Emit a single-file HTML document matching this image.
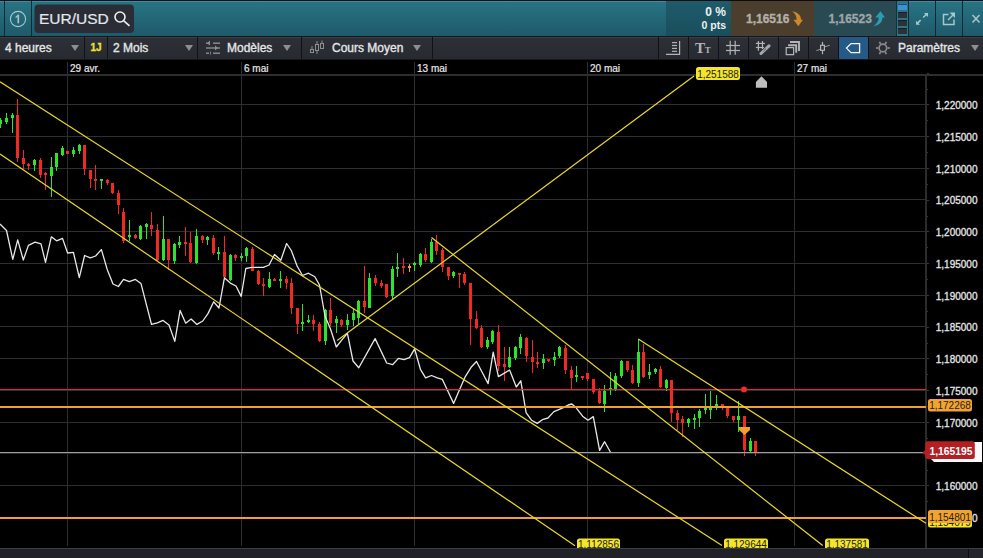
<!DOCTYPE html>
<html><head><meta charset="utf-8">
<style>
*{margin:0;padding:0}
html,body{width:983px;height:558px;overflow:hidden;background:#000}
svg{display:block}
text{font-family:"Liberation Sans",sans-serif}
</style></head><body>
<svg width="983" height="558" viewBox="0 0 983 558">
<defs>
<linearGradient id="gteal" x1="0" y1="0" x2="0" y2="1"><stop offset="0" stop-color="#287484"/><stop offset="1" stop-color="#1e5a6a"/></linearGradient>
<linearGradient id="gpct" x1="0" y1="0" x2="0" y2="1"><stop offset="0" stop-color="#1f5b6a"/><stop offset="1" stop-color="#1a4e5c"/></linearGradient>
<linearGradient id="gtool" x1="0" y1="0" x2="0" y2="1"><stop offset="0" stop-color="#2d3037"/><stop offset="1" stop-color="#272a31"/></linearGradient>
</defs>
<rect x="0" y="74" width="983" height="2" fill="#2e2e2e" />
<rect x="0" y="104" width="926" height="1" fill="#2e2e2e" />
<rect x="0" y="136" width="926" height="1" fill="#2e2e2e" />
<rect x="0" y="168" width="926" height="1" fill="#2e2e2e" />
<rect x="0" y="199" width="926" height="1" fill="#2e2e2e" />
<rect x="0" y="231" width="926" height="1" fill="#2e2e2e" />
<rect x="0" y="263" width="926" height="1" fill="#2e2e2e" />
<rect x="0" y="295" width="926" height="1" fill="#2e2e2e" />
<rect x="0" y="326" width="926" height="1" fill="#2e2e2e" />
<rect x="0" y="358" width="926" height="1" fill="#2e2e2e" />
<rect x="0" y="390" width="926" height="1" fill="#2e2e2e" />
<rect x="0" y="422" width="926" height="1" fill="#2e2e2e" />
<rect x="0" y="453" width="926" height="1" fill="#2e2e2e" />
<rect x="0" y="485" width="926" height="1" fill="#2e2e2e" />
<rect x="67" y="62" width="1" height="484" fill="#2e2e2e" />
<rect x="241" y="62" width="1" height="484" fill="#2e2e2e" />
<rect x="414" y="62" width="1" height="484" fill="#2e2e2e" />
<rect x="587" y="62" width="1" height="484" fill="#2e2e2e" />
<rect x="794" y="62" width="1" height="484" fill="#2e2e2e" />
<rect x="925" y="76" width="2" height="472" fill="#2c2c2c" />
<rect x="927" y="73" width="2" height="1" fill="#3a3a3a" />
<rect x="927" y="89" width="1" height="1" fill="#3a3a3a" />
<rect x="927" y="104" width="2" height="1" fill="#3a3a3a" />
<rect x="927" y="120" width="1" height="1" fill="#3a3a3a" />
<rect x="927" y="136" width="2" height="1" fill="#3a3a3a" />
<rect x="927" y="152" width="1" height="1" fill="#3a3a3a" />
<rect x="927" y="168" width="2" height="1" fill="#3a3a3a" />
<rect x="927" y="184" width="1" height="1" fill="#3a3a3a" />
<rect x="927" y="200" width="2" height="1" fill="#3a3a3a" />
<rect x="927" y="216" width="1" height="1" fill="#3a3a3a" />
<rect x="927" y="231" width="2" height="1" fill="#3a3a3a" />
<rect x="927" y="247" width="1" height="1" fill="#3a3a3a" />
<rect x="927" y="263" width="2" height="1" fill="#3a3a3a" />
<rect x="927" y="279" width="1" height="1" fill="#3a3a3a" />
<rect x="927" y="295" width="2" height="1" fill="#3a3a3a" />
<rect x="927" y="311" width="1" height="1" fill="#3a3a3a" />
<rect x="927" y="327" width="2" height="1" fill="#3a3a3a" />
<rect x="927" y="343" width="1" height="1" fill="#3a3a3a" />
<rect x="927" y="358" width="2" height="1" fill="#3a3a3a" />
<rect x="927" y="374" width="1" height="1" fill="#3a3a3a" />
<rect x="927" y="390" width="2" height="1" fill="#3a3a3a" />
<rect x="927" y="406" width="1" height="1" fill="#3a3a3a" />
<rect x="927" y="422" width="2" height="1" fill="#3a3a3a" />
<rect x="927" y="438" width="1" height="1" fill="#3a3a3a" />
<rect x="927" y="454" width="2" height="1" fill="#3a3a3a" />
<rect x="927" y="470" width="1" height="1" fill="#3a3a3a" />
<rect x="927" y="485" width="2" height="1" fill="#3a3a3a" />
<rect x="927" y="501" width="1" height="1" fill="#3a3a3a" />
<rect x="0" y="118" width="1" height="10" fill="#2be52b" />
<rect x="-1" y="120" width="3" height="4" fill="#2be52b" />
<rect x="6" y="113" width="1" height="11" fill="#2be52b" />
<rect x="5" y="118" width="3" height="4" fill="#2be52b" />
<rect x="12" y="113" width="1" height="20" fill="#2be52b" />
<rect x="11" y="115" width="3" height="3" fill="#2be52b" />
<rect x="17" y="99" width="1" height="63" fill="#f02a22" />
<rect x="16" y="115" width="3" height="43" fill="#f02a22" />
<rect x="23" y="150" width="1" height="19" fill="#f02a22" />
<rect x="22" y="158" width="3" height="6" fill="#f02a22" />
<rect x="28" y="163" width="1" height="7" fill="#f02a22" />
<rect x="27" y="164" width="3" height="2" fill="#f02a22" />
<rect x="34" y="159" width="1" height="12" fill="#2be52b" />
<rect x="33" y="160" width="3" height="5" fill="#2be52b" />
<rect x="40" y="158" width="1" height="20" fill="#f02a22" />
<rect x="39" y="160" width="3" height="15" fill="#f02a22" />
<rect x="45" y="172" width="1" height="18" fill="#f02a22" />
<rect x="44" y="173" width="3" height="2" fill="#f02a22" />
<rect x="51" y="157" width="1" height="40" fill="#2be52b" />
<rect x="50" y="167" width="3" height="9" fill="#2be52b" />
<rect x="56" y="153" width="1" height="18" fill="#2be52b" />
<rect x="55" y="153" width="3" height="14" fill="#2be52b" />
<rect x="62" y="146" width="1" height="10" fill="#2be52b" />
<rect x="61" y="148" width="3" height="7" fill="#2be52b" />
<rect x="67" y="151" width="1" height="3" fill="#f02a22" />
<rect x="66" y="151" width="3" height="3" fill="#f02a22" />
<rect x="73" y="147" width="1" height="10" fill="#2be52b" />
<rect x="72" y="150" width="3" height="4" fill="#2be52b" />
<rect x="79" y="144" width="1" height="10" fill="#2be52b" />
<rect x="78" y="145" width="3" height="6" fill="#2be52b" />
<rect x="84" y="145" width="1" height="30" fill="#f02a22" />
<rect x="83" y="145" width="3" height="24" fill="#f02a22" />
<rect x="90" y="170" width="1" height="18" fill="#f02a22" />
<rect x="89" y="170" width="3" height="9" fill="#f02a22" />
<rect x="95" y="165" width="1" height="25" fill="#f02a22" />
<rect x="94" y="179" width="3" height="2" fill="#f02a22" />
<rect x="101" y="179" width="1" height="10" fill="#2be52b" />
<rect x="100" y="179" width="3" height="2" fill="#2be52b" />
<rect x="107" y="179" width="1" height="6" fill="#f02a22" />
<rect x="106" y="180" width="3" height="3" fill="#f02a22" />
<rect x="112" y="183" width="1" height="11" fill="#f02a22" />
<rect x="111" y="183" width="3" height="10" fill="#f02a22" />
<rect x="118" y="190" width="1" height="24" fill="#f02a22" />
<rect x="117" y="193" width="3" height="12" fill="#f02a22" />
<rect x="123" y="208" width="1" height="35" fill="#f02a22" />
<rect x="122" y="212" width="3" height="29" fill="#f02a22" />
<rect x="129" y="220" width="1" height="21" fill="#2be52b" />
<rect x="128" y="235" width="3" height="2" fill="#2be52b" />
<rect x="135" y="234" width="1" height="5" fill="#f02a22" />
<rect x="134" y="235" width="3" height="3" fill="#f02a22" />
<rect x="140" y="225" width="1" height="15" fill="#2be52b" />
<rect x="139" y="226" width="3" height="13" fill="#2be52b" />
<rect x="146" y="223" width="1" height="16" fill="#2be52b" />
<rect x="145" y="224" width="3" height="3" fill="#2be52b" />
<rect x="151" y="212" width="1" height="24" fill="#f02a22" />
<rect x="150" y="225" width="3" height="4" fill="#f02a22" />
<rect x="157" y="224" width="1" height="37" fill="#f02a22" />
<rect x="156" y="230" width="3" height="30" fill="#f02a22" />
<rect x="163" y="216" width="1" height="45" fill="#2be52b" />
<rect x="162" y="239" width="3" height="21" fill="#2be52b" />
<rect x="168" y="239" width="1" height="31" fill="#f02a22" />
<rect x="167" y="239" width="3" height="21" fill="#f02a22" />
<rect x="174" y="243" width="1" height="21" fill="#2be52b" />
<rect x="173" y="244" width="3" height="17" fill="#2be52b" />
<rect x="179" y="236" width="1" height="12" fill="#2be52b" />
<rect x="178" y="242" width="3" height="3" fill="#2be52b" />
<rect x="185" y="227" width="1" height="29" fill="#f02a22" />
<rect x="184" y="242" width="3" height="2" fill="#f02a22" />
<rect x="190" y="232" width="1" height="31" fill="#f02a22" />
<rect x="189" y="243" width="3" height="19" fill="#f02a22" />
<rect x="196" y="229" width="1" height="35" fill="#2be52b" />
<rect x="195" y="236" width="3" height="27" fill="#2be52b" />
<rect x="202" y="235" width="1" height="8" fill="#f02a22" />
<rect x="201" y="236" width="3" height="4" fill="#f02a22" />
<rect x="207" y="236" width="1" height="9" fill="#2be52b" />
<rect x="206" y="237" width="3" height="3" fill="#2be52b" />
<rect x="213" y="235" width="1" height="20" fill="#f02a22" />
<rect x="212" y="238" width="3" height="15" fill="#f02a22" />
<rect x="218" y="247" width="1" height="13" fill="#2be52b" />
<rect x="217" y="252" width="3" height="2" fill="#2be52b" />
<rect x="224" y="236" width="1" height="42" fill="#f02a22" />
<rect x="223" y="252" width="3" height="25" fill="#f02a22" />
<rect x="230" y="254" width="1" height="27" fill="#2be52b" />
<rect x="229" y="255" width="3" height="25" fill="#2be52b" />
<rect x="235" y="254" width="1" height="7" fill="#f02a22" />
<rect x="234" y="255" width="3" height="3" fill="#f02a22" />
<rect x="241" y="253" width="1" height="8" fill="#2be52b" />
<rect x="240" y="256" width="3" height="2" fill="#2be52b" />
<rect x="246" y="247" width="1" height="15" fill="#2be52b" />
<rect x="245" y="248" width="3" height="8" fill="#2be52b" />
<rect x="252" y="247" width="1" height="24" fill="#f02a22" />
<rect x="251" y="249" width="3" height="22" fill="#f02a22" />
<rect x="258" y="270" width="1" height="15" fill="#f02a22" />
<rect x="257" y="271" width="3" height="13" fill="#f02a22" />
<rect x="263" y="278" width="1" height="18" fill="#f02a22" />
<rect x="262" y="284" width="3" height="2" fill="#f02a22" />
<rect x="269" y="272" width="1" height="16" fill="#2be52b" />
<rect x="268" y="279" width="3" height="8" fill="#2be52b" />
<rect x="274" y="278" width="1" height="3" fill="#f02a22" />
<rect x="273" y="279" width="3" height="2" fill="#f02a22" />
<rect x="280" y="271" width="1" height="17" fill="#2be52b" />
<rect x="279" y="279" width="3" height="2" fill="#2be52b" />
<rect x="286" y="276" width="1" height="13" fill="#f02a22" />
<rect x="285" y="279" width="3" height="4" fill="#f02a22" />
<rect x="291" y="278" width="1" height="36" fill="#f02a22" />
<rect x="290" y="283" width="3" height="25" fill="#f02a22" />
<rect x="297" y="308" width="1" height="26" fill="#f02a22" />
<rect x="296" y="308" width="3" height="16" fill="#f02a22" />
<rect x="302" y="304" width="1" height="27" fill="#2be52b" />
<rect x="301" y="322" width="3" height="2" fill="#2be52b" />
<rect x="308" y="315" width="1" height="8" fill="#2be52b" />
<rect x="307" y="320" width="3" height="2" fill="#2be52b" />
<rect x="313" y="315" width="1" height="16" fill="#f02a22" />
<rect x="312" y="320" width="3" height="4" fill="#f02a22" />
<rect x="319" y="322" width="1" height="20" fill="#f02a22" />
<rect x="318" y="324" width="3" height="17" fill="#f02a22" />
<rect x="325" y="309" width="1" height="36" fill="#2be52b" />
<rect x="324" y="310" width="3" height="31" fill="#2be52b" />
<rect x="330" y="298" width="1" height="28" fill="#f02a22" />
<rect x="329" y="310" width="3" height="13" fill="#f02a22" />
<rect x="336" y="316" width="1" height="17" fill="#2be52b" />
<rect x="335" y="319" width="3" height="4" fill="#2be52b" />
<rect x="341" y="319" width="1" height="8" fill="#f02a22" />
<rect x="340" y="320" width="3" height="5" fill="#f02a22" />
<rect x="347" y="314" width="1" height="16" fill="#2be52b" />
<rect x="346" y="320" width="3" height="5" fill="#2be52b" />
<rect x="353" y="309" width="1" height="17" fill="#2be52b" />
<rect x="352" y="313" width="3" height="7" fill="#2be52b" />
<rect x="358" y="300" width="1" height="25" fill="#2be52b" />
<rect x="357" y="301" width="3" height="17" fill="#2be52b" />
<rect x="364" y="266" width="1" height="47" fill="#f02a22" />
<rect x="363" y="301" width="3" height="6" fill="#f02a22" />
<rect x="369" y="273" width="1" height="35" fill="#2be52b" />
<rect x="368" y="278" width="3" height="30" fill="#2be52b" />
<rect x="375" y="275" width="1" height="11" fill="#f02a22" />
<rect x="374" y="278" width="3" height="5" fill="#f02a22" />
<rect x="381" y="280" width="1" height="8" fill="#f02a22" />
<rect x="380" y="283" width="3" height="3" fill="#f02a22" />
<rect x="386" y="284" width="1" height="14" fill="#f02a22" />
<rect x="385" y="284" width="3" height="13" fill="#f02a22" />
<rect x="392" y="266" width="1" height="34" fill="#2be52b" />
<rect x="391" y="269" width="3" height="27" fill="#2be52b" />
<rect x="397" y="253" width="1" height="24" fill="#2be52b" />
<rect x="396" y="267" width="3" height="2" fill="#2be52b" />
<rect x="403" y="258" width="1" height="16" fill="#f02a22" />
<rect x="402" y="266" width="3" height="2" fill="#f02a22" />
<rect x="409" y="264" width="1" height="8" fill="#f0a030" />
<rect x="408" y="266" width="3" height="2" fill="#f0a030" />
<rect x="414" y="262" width="1" height="9" fill="#2be52b" />
<rect x="413" y="263" width="3" height="2" fill="#2be52b" />
<rect x="420" y="253" width="1" height="14" fill="#2be52b" />
<rect x="419" y="254" width="3" height="11" fill="#2be52b" />
<rect x="425" y="248" width="1" height="14" fill="#f02a22" />
<rect x="424" y="254" width="3" height="6" fill="#f02a22" />
<rect x="431" y="239" width="1" height="24" fill="#2be52b" />
<rect x="430" y="242" width="3" height="20" fill="#2be52b" />
<rect x="436" y="235" width="1" height="20" fill="#f02a22" />
<rect x="435" y="242" width="3" height="9" fill="#f02a22" />
<rect x="442" y="248" width="1" height="24" fill="#f02a22" />
<rect x="441" y="250" width="3" height="17" fill="#f02a22" />
<rect x="448" y="267" width="1" height="13" fill="#f02a22" />
<rect x="447" y="267" width="3" height="9" fill="#f02a22" />
<rect x="453" y="271" width="1" height="7" fill="#2be52b" />
<rect x="452" y="272" width="3" height="4" fill="#2be52b" />
<rect x="459" y="273" width="1" height="15" fill="#f02a22" />
<rect x="458" y="273" width="3" height="2" fill="#f02a22" />
<rect x="464" y="272" width="1" height="13" fill="#f02a22" />
<rect x="463" y="274" width="3" height="9" fill="#f02a22" />
<rect x="470" y="283" width="1" height="62" fill="#f02a22" />
<rect x="469" y="283" width="3" height="36" fill="#f02a22" />
<rect x="476" y="311" width="1" height="18" fill="#f02a22" />
<rect x="475" y="319" width="3" height="9" fill="#f02a22" />
<rect x="481" y="325" width="1" height="23" fill="#f02a22" />
<rect x="480" y="328" width="3" height="19" fill="#f02a22" />
<rect x="487" y="337" width="1" height="12" fill="#2be52b" />
<rect x="486" y="340" width="3" height="7" fill="#2be52b" />
<rect x="492" y="330" width="1" height="14" fill="#2be52b" />
<rect x="491" y="331" width="3" height="11" fill="#2be52b" />
<rect x="498" y="325" width="1" height="46" fill="#f02a22" />
<rect x="497" y="332" width="3" height="34" fill="#f02a22" />
<rect x="504" y="347" width="1" height="34" fill="#f02a22" />
<rect x="503" y="364" width="3" height="3" fill="#f02a22" />
<rect x="509" y="347" width="1" height="21" fill="#2be52b" />
<rect x="508" y="357" width="3" height="10" fill="#2be52b" />
<rect x="515" y="346" width="1" height="14" fill="#2be52b" />
<rect x="514" y="347" width="3" height="11" fill="#2be52b" />
<rect x="520" y="334" width="1" height="20" fill="#2be52b" />
<rect x="519" y="337" width="3" height="11" fill="#2be52b" />
<rect x="526" y="337" width="1" height="25" fill="#f02a22" />
<rect x="525" y="338" width="3" height="18" fill="#f02a22" />
<rect x="532" y="340" width="1" height="33" fill="#f02a22" />
<rect x="531" y="357" width="3" height="5" fill="#f02a22" />
<rect x="537" y="352" width="1" height="16" fill="#f02a22" />
<rect x="536" y="362" width="3" height="2" fill="#f02a22" />
<rect x="543" y="354" width="1" height="15" fill="#2be52b" />
<rect x="542" y="359" width="3" height="4" fill="#2be52b" />
<rect x="548" y="359" width="1" height="3" fill="#f02a22" />
<rect x="547" y="359" width="3" height="2" fill="#f02a22" />
<rect x="554" y="352" width="1" height="14" fill="#2be52b" />
<rect x="553" y="357" width="3" height="3" fill="#2be52b" />
<rect x="559" y="346" width="1" height="12" fill="#2be52b" />
<rect x="558" y="347" width="3" height="9" fill="#2be52b" />
<rect x="565" y="345" width="1" height="29" fill="#f02a22" />
<rect x="564" y="348" width="3" height="22" fill="#f02a22" />
<rect x="571" y="366" width="1" height="23" fill="#f02a22" />
<rect x="570" y="370" width="3" height="8" fill="#f02a22" />
<rect x="576" y="366" width="1" height="16" fill="#2be52b" />
<rect x="575" y="375" width="3" height="2" fill="#2be52b" />
<rect x="582" y="376" width="1" height="4" fill="#f02a22" />
<rect x="581" y="376" width="3" height="2" fill="#f02a22" />
<rect x="587" y="373" width="1" height="8" fill="#f02a22" />
<rect x="586" y="373" width="3" height="6" fill="#f02a22" />
<rect x="593" y="379" width="1" height="15" fill="#f02a22" />
<rect x="592" y="379" width="3" height="13" fill="#f02a22" />
<rect x="599" y="388" width="1" height="16" fill="#f02a22" />
<rect x="598" y="391" width="3" height="12" fill="#f02a22" />
<rect x="604" y="385" width="1" height="27" fill="#2be52b" />
<rect x="603" y="391" width="3" height="13" fill="#2be52b" />
<rect x="610" y="372" width="1" height="23" fill="#2be52b" />
<rect x="609" y="388" width="3" height="2" fill="#2be52b" />
<rect x="615" y="373" width="1" height="18" fill="#2be52b" />
<rect x="614" y="376" width="3" height="13" fill="#2be52b" />
<rect x="621" y="360" width="1" height="18" fill="#2be52b" />
<rect x="620" y="361" width="3" height="15" fill="#2be52b" />
<rect x="627" y="361" width="1" height="11" fill="#f02a22" />
<rect x="626" y="361" width="3" height="9" fill="#f02a22" />
<rect x="632" y="365" width="1" height="19" fill="#f02a22" />
<rect x="631" y="370" width="3" height="13" fill="#f02a22" />
<rect x="638" y="339" width="1" height="48" fill="#2be52b" />
<rect x="637" y="352" width="3" height="31" fill="#2be52b" />
<rect x="643" y="344" width="1" height="34" fill="#f02a22" />
<rect x="642" y="352" width="3" height="25" fill="#f02a22" />
<rect x="649" y="364" width="1" height="15" fill="#2be52b" />
<rect x="648" y="372" width="3" height="3" fill="#2be52b" />
<rect x="655" y="368" width="1" height="6" fill="#2be52b" />
<rect x="654" y="369" width="3" height="3" fill="#2be52b" />
<rect x="660" y="366" width="1" height="22" fill="#f02a22" />
<rect x="659" y="369" width="3" height="18" fill="#f02a22" />
<rect x="666" y="379" width="1" height="12" fill="#2be52b" />
<rect x="665" y="380" width="3" height="8" fill="#2be52b" />
<rect x="671" y="380" width="1" height="42" fill="#f02a22" />
<rect x="670" y="380" width="3" height="33" fill="#f02a22" />
<rect x="677" y="410" width="1" height="20" fill="#f02a22" />
<rect x="676" y="413" width="3" height="7" fill="#f02a22" />
<rect x="682" y="416" width="1" height="21" fill="#f02a22" />
<rect x="681" y="419" width="3" height="4" fill="#f02a22" />
<rect x="688" y="418" width="1" height="9" fill="#2be52b" />
<rect x="687" y="419" width="3" height="4" fill="#2be52b" />
<rect x="694" y="414" width="1" height="15" fill="#2be52b" />
<rect x="693" y="418" width="3" height="2" fill="#2be52b" />
<rect x="699" y="409" width="1" height="18" fill="#2be52b" />
<rect x="698" y="411" width="3" height="7" fill="#2be52b" />
<rect x="705" y="394" width="1" height="20" fill="#2be52b" />
<rect x="704" y="408" width="3" height="2" fill="#2be52b" />
<rect x="710" y="391" width="1" height="28" fill="#2be52b" />
<rect x="709" y="408" width="3" height="2" fill="#2be52b" />
<rect x="716" y="395" width="1" height="15" fill="#2be52b" />
<rect x="715" y="404" width="3" height="2" fill="#2be52b" />
<rect x="722" y="404" width="1" height="6" fill="#f02a22" />
<rect x="721" y="404" width="3" height="2" fill="#f02a22" />
<rect x="727" y="408" width="1" height="10" fill="#f02a22" />
<rect x="726" y="408" width="3" height="8" fill="#f02a22" />
<rect x="733" y="416" width="1" height="6" fill="#f02a22" />
<rect x="732" y="416" width="3" height="4" fill="#f02a22" />
<rect x="738" y="401" width="1" height="31" fill="#2be52b" />
<rect x="737" y="416" width="3" height="4" fill="#2be52b" />
<rect x="744" y="416" width="1" height="40" fill="#f02a22" />
<rect x="743" y="416" width="3" height="34" fill="#f02a22" />
<rect x="750" y="438" width="1" height="14" fill="#2be52b" />
<rect x="749" y="441" width="3" height="10" fill="#2be52b" />
<rect x="755" y="441" width="1" height="15" fill="#f02a22" />
<rect x="754" y="441" width="3" height="11" fill="#f02a22" />
<polyline points="0.0,224.0 6.5,230.5 12.8,259.4 17.7,239.8 23.3,260.0 28.4,245.4 35.0,242.2 41.0,243.8 45.5,262.4 51.3,236.8 56.6,240.8 62.5,238.4 67.6,253.0 73.4,252.4 79.3,277.6 84.6,255.5 90.4,257.8 95.6,256.0 101.4,249.6 107.2,269.4 113.0,284.0 118.4,286.5 123.5,279.4 129.3,281.7 135.4,279.4 141.0,283.6 151.5,324.4 157.3,322.8 163.1,320.4 169.0,325.0 174.8,341.4 180.1,310.4 185.7,323.2 191.1,319.0 196.9,324.4 202.8,321.0 208.1,313.4 213.7,301.8 219.0,308.0 224.4,277.8 230.3,283.1 236.0,286.0 241.2,296.4 245.8,268.5 251.7,267.3 263.3,267.3 269.1,265.0 274.5,254.5 280.8,260.3 286.6,243.5 291.3,250.5 297.1,266.0 302.5,275.5 308.5,273.2 314.8,276.7 319.5,285.0 325.0,316.0 330.5,329.0 336.3,347.0 342.1,339.6 347.4,333.3 353.0,361.0 358.8,367.7 375.1,338.6 386.7,363.0 392.6,364.7 398.4,358.4 404.0,359.7 409.5,357.6 414.6,348.8 420.4,369.3 425.6,377.8 431.5,375.5 437.3,377.8 442.4,379.4 447.8,391.0 453.6,403.4 459.4,390.0 465.3,376.6 471.1,367.3 476.5,361.5 482.0,372.0 488.1,383.6 493.2,352.1 498.4,376.6 504.4,373.1 509.6,370.0 516.3,387.0 520.8,380.8 526.1,412.7 531.5,420.2 537.2,423.4 543.2,419.3 548.0,418.0 553.9,411.6 559.3,409.4 563.8,407.3 568.2,405.0 571.8,404.0 576.0,407.6 582.6,416.2 588.0,420.2 593.3,416.6 599.6,450.3 604.6,441.7 610.4,452.0" fill="none" stroke="#e8e8e8" stroke-width="1.3" stroke-linejoin="round"/>
<rect x="0" y="389" width="926" height="1" fill="#e82626" />
<rect x="0" y="406" width="926" height="2" fill="#f0a030" />
<rect x="0" y="452" width="926" height="1" fill="#a0a0a0" />
<rect x="0" y="517" width="926" height="2" fill="#f0a030" />
<circle cx="744" cy="389.5" r="3" fill="#e83030"/>
<line x1="0" y1="81.7" x2="722" y2="545.5" stroke="#ecd82a" stroke-width="1.2"/>
<line x1="0" y1="154" x2="575" y2="545.7" stroke="#ecd82a" stroke-width="1.2"/>
<line x1="431.5" y1="237.5" x2="822.7" y2="545.5" stroke="#ecd82a" stroke-width="1.2"/>
<line x1="337.2" y1="340.4" x2="694" y2="76" stroke="#ecd82a" stroke-width="1.2"/>
<line x1="638.3" y1="338.9" x2="926" y2="523.3" stroke="#ecd82a" stroke-width="1.2"/>
<path d="M739 427 L750 427 L750 430 L744.5 435 L739 430 Z" fill="#f0a030"/>
<path d="M755.9 82 L761.5 76.3 L767 82 L767 87.8 L755.9 87.8 Z" fill="#bdbdbd"/>
<text x="70" y="71.7" font-size="10" fill="#e8e8e8" font-weight="normal" text-anchor="start" stroke="#e8e8e8" stroke-width="0.2" >29 avr.</text>
<text x="244" y="71.7" font-size="10" fill="#e8e8e8" font-weight="normal" text-anchor="start" stroke="#e8e8e8" stroke-width="0.2" >6 mai</text>
<text x="417" y="71.7" font-size="10" fill="#e8e8e8" font-weight="normal" text-anchor="start" stroke="#e8e8e8" stroke-width="0.2" >13 mai</text>
<text x="590" y="71.7" font-size="10" fill="#e8e8e8" font-weight="normal" text-anchor="start" stroke="#e8e8e8" stroke-width="0.2" >20 mai</text>
<text x="797" y="71.7" font-size="10" fill="#e8e8e8" font-weight="normal" text-anchor="start" stroke="#e8e8e8" stroke-width="0.2" >27 mai</text>
<text x="977.5" y="109.1" font-size="10" fill="#e6e6e6" font-weight="normal" text-anchor="end" stroke="#e6e6e6" stroke-width="0.3" >1,220000</text>
<text x="977.5" y="140.8499999999993" font-size="10" fill="#e6e6e6" font-weight="normal" text-anchor="end" stroke="#e6e6e6" stroke-width="0.3" >1,215000</text>
<text x="977.5" y="172.60000000000005" font-size="10" fill="#e6e6e6" font-weight="normal" text-anchor="end" stroke="#e6e6e6" stroke-width="0.3" >1,210000</text>
<text x="977.5" y="204.34999999999937" font-size="10" fill="#e6e6e6" font-weight="normal" text-anchor="end" stroke="#e6e6e6" stroke-width="0.3" >1,205000</text>
<text x="977.5" y="236.1000000000001" font-size="10" fill="#e6e6e6" font-weight="normal" text-anchor="end" stroke="#e6e6e6" stroke-width="0.3" >1,200000</text>
<text x="977.5" y="267.84999999999945" font-size="10" fill="#e6e6e6" font-weight="normal" text-anchor="end" stroke="#e6e6e6" stroke-width="0.3" >1,195000</text>
<text x="977.5" y="299.6000000000002" font-size="10" fill="#e6e6e6" font-weight="normal" text-anchor="end" stroke="#e6e6e6" stroke-width="0.3" >1,190000</text>
<text x="977.5" y="331.3499999999995" font-size="10" fill="#e6e6e6" font-weight="normal" text-anchor="end" stroke="#e6e6e6" stroke-width="0.3" >1,185000</text>
<text x="977.5" y="363.10000000000025" font-size="10" fill="#e6e6e6" font-weight="normal" text-anchor="end" stroke="#e6e6e6" stroke-width="0.3" >1,180000</text>
<text x="977.5" y="394.84999999999957" font-size="10" fill="#e6e6e6" font-weight="normal" text-anchor="end" stroke="#e6e6e6" stroke-width="0.3" >1,175000</text>
<text x="977.5" y="426.6000000000003" font-size="10" fill="#e6e6e6" font-weight="normal" text-anchor="end" stroke="#e6e6e6" stroke-width="0.3" >1,170000</text>
<text x="977.5" y="490.10000000000036" font-size="10" fill="#e6e6e6" font-weight="normal" text-anchor="end" stroke="#e6e6e6" stroke-width="0.3" >1,160000</text>
<text x="977.5" y="521.8499999999997" font-size="10" fill="#e6e6e6" font-weight="normal" text-anchor="end" stroke="#e6e6e6" stroke-width="0.3" >1,155000</text>
<rect x="696" y="67" width="44" height="13" rx="2.5" fill="#f4e42a"/>
<text x="718.0" y="77.7" font-size="10" fill="#1e1e1e" font-weight="normal" text-anchor="middle"  >1,251588</text>
<rect x="577" y="538.5" width="43" height="12" rx="2.5" fill="#f4e42a"/>
<text x="598.5" y="548" font-size="10" fill="#1e1e1e" font-weight="normal" text-anchor="middle"  >1,112856</text>
<rect x="724" y="538.5" width="44" height="12" rx="2.5" fill="#f4e42a"/>
<text x="746.0" y="548" font-size="10" fill="#1e1e1e" font-weight="normal" text-anchor="middle"  >1,129644</text>
<rect x="825" y="538.5" width="44" height="12" rx="2.5" fill="#f4e42a"/>
<text x="847.0" y="548" font-size="10" fill="#1e1e1e" font-weight="normal" text-anchor="middle"  >1,137581</text>
<rect x="928" y="399" width="44" height="12.5" rx="2.5" fill="#f3a42e"/>
<text x="950.0" y="409" font-size="10" fill="#1e1e1e" font-weight="normal" text-anchor="middle"  >1,172268</text>
<rect x="928" y="512" width="44" height="15.5" rx="2.5" fill="#f4e42a"/>
<text x="950.0" y="525.5" font-size="10" fill="#1e1e1e" font-weight="normal" text-anchor="middle"  >1,154079</text>
<rect x="928" y="510" width="44" height="13" rx="2.5" fill="#f3a42e"/>
<text x="950.0" y="520.5" font-size="10" fill="#1e1e1e" font-weight="normal" text-anchor="middle"  >1,154801</text>
<path d="M929 442 L982 442 L982 462 L934 462 L931 459 Z" fill="#fafafa"/>
<rect x="925.2" y="441.2" width="49.6" height="17.7" rx="2.5" fill="#b31f23"/><path d="M926 449.5 L922.5 452.5 L926 455.5 Z" fill="#b31f23"/>
<text x="951" y="454.6" font-size="10.3" fill="#ffffff" font-weight="bold" text-anchor="middle"  >1,165195</text>
<rect x="0" y="548" width="983" height="10" fill="#202228" />
<rect x="0" y="548" width="983" height="1" fill="#3b3e45" />
<rect x="968" y="549" width="1" height="9" fill="#0c0d10" />
<rect x="969" y="549" width="14" height="9" fill="#24262c" />
<rect x="0" y="0" width="983" height="37" fill="#0b0d10" />
<rect x="0" y="1" width="983" height="35" fill="url(#gteal)" />
<rect x="0" y="1" width="983" height="1" fill="#3791a3" />
<rect x="4" y="1" width="1" height="35" fill="#0f2a32" />
<rect x="31" y="1" width="1" height="35" fill="#0f2a32" />
<circle cx="18" cy="19" r="7.6" fill="none" stroke="#a9c7cc" stroke-width="1.1"/>
<path d="M18.3 14.8 L18.3 23.3" stroke="#a9c7cc" stroke-width="1.6"/><path d="M15.6 17.6 L18.6 15" stroke="#a9c7cc" stroke-width="1.3"/>
<rect x="34.5" y="4.5" width="99.5" height="28.5" rx="4" fill="#2a2d35"/>
<text x="39" y="23.7" font-size="15.5" fill="#e4e8ee" font-weight="normal" text-anchor="start" stroke="#e4e8ee" stroke-width="0.2" >EUR/USD</text>
<g stroke="#f0f0f0" stroke-width="1.6" fill="none"><circle cx="120" cy="17" r="5"/><line x1="123.8" y1="20.8" x2="129.5" y2="25.8"/></g>
<rect x="666" y="1" width="65" height="35" fill="url(#gpct)" />
<text x="726" y="16" font-size="12" fill="#f0f0f0" font-weight="bold" text-anchor="end"  >0 %</text>
<text x="726" y="28.5" font-size="10.5" fill="#f0f0f0" font-weight="bold" text-anchor="end"  >0 pts</text>
<rect x="731" y="1" width="83" height="35" fill="#4c3e2d" />
<text x="746" y="22.9" font-size="12" fill="#b4b0a8" font-weight="bold" text-anchor="start" stroke="#b4b0a8" stroke-width="0.3" >1,16516</text>
<path d="M792 11.2 C797.8 12 801.2 15.5 801 19.8 L803 19.8 L798.3 26.2 L793.5 19.8 L796.6 19.8 C796.8 16.5 795.2 13.5 792 11.2 Z" fill="#cc872a"/>
<rect x="814" y="1" width="82" height="35" fill="#294a52" />
<text x="828.5" y="22.9" font-size="12" fill="#9ea6a8" font-weight="bold" text-anchor="start" stroke="#9ea6a8" stroke-width="0.3" >1,16523</text>
<path d="M880.5 11.2 L885 17.6 L882.4 17.6 C882.6 22 879.2 25.5 873.2 26.4 C877 23.5 878.9 21 878.7 17.6 L875.3 17.6 Z" fill="#2a9db4"/>
<rect x="896" y="1" width="12" height="35" fill="#2a7686" />
<rect x="896" y="1" width="1" height="35" fill="#123038" />
<rect x="898" y="4" width="9" height="6" fill="#3f8fd6" />
<rect x="898" y="4" width="9" height="1" fill="#1d4f7a" />
<rect x="898" y="12" width="9" height="6" fill="#2e3038" />
<rect x="898" y="12" width="9" height="1" fill="#1b1d22" />
<rect x="898" y="20" width="9" height="6" fill="#2e3038" />
<rect x="898" y="20" width="9" height="1" fill="#1b1d22" />
<rect x="898" y="28" width="9" height="6" fill="#2e3038" />
<rect x="898" y="28" width="9" height="1" fill="#1b1d22" />
<rect x="908" y="1" width="1" height="35" fill="#0f2a32" />
<rect x="935" y="1" width="1" height="35" fill="#0f2a32" />
<rect x="962" y="1" width="1" height="35" fill="#0f2a32" />
<g stroke="#a9c6ca" stroke-width="1.5" fill="none"><line x1="916.8" y1="23.9" x2="920.6" y2="20.1"/><line x1="923.2" y1="17.5" x2="927" y2="13.7"/>
<path d="M948.5 14.5 L943.5 14.5 L943.5 24.5 L954 24.5 L954 19.5"/><line x1="948" y1="20" x2="954.5" y2="13.5"/><line x1="972.5" y1="15" x2="979.5" y2="22.5"/><line x1="979.5" y1="15" x2="972.5" y2="22.5"/></g>
<g fill="#a9c6ca"><path d="M916 24.7 L916 20.7 L920 24.7 Z"/><path d="M928 12.9 L928 16.9 L924 12.9 Z"/><path d="M955 12.5 L955 18 L949.5 12.5 Z"/></g>
<rect x="0" y="36" width="983" height="24" fill="#15171b" />
<rect x="0" y="37" width="983" height="22" fill="url(#gtool)" />
<rect x="0" y="37" width="983" height="1" fill="#3b3d44" />
<rect x="84" y="37" width="1" height="22" fill="#101216" />
<rect x="107" y="37" width="1" height="22" fill="#101216" />
<rect x="197" y="37" width="1" height="22" fill="#101216" />
<rect x="301" y="37" width="1" height="22" fill="#101216" />
<rect x="432" y="37" width="1" height="22" fill="#101216" />
<rect x="658" y="37" width="1" height="22" fill="#101216" />
<rect x="688" y="37" width="1" height="22" fill="#101216" />
<rect x="718" y="37" width="1" height="22" fill="#101216" />
<rect x="748" y="37" width="1" height="22" fill="#101216" />
<rect x="778" y="37" width="1" height="22" fill="#101216" />
<rect x="808" y="37" width="1" height="22" fill="#101216" />
<rect x="838" y="37" width="1" height="22" fill="#101216" />
<rect x="868" y="37" width="1" height="22" fill="#101216" />
<rect x="839" y="37" width="29" height="22" fill="#245a85" />
<text x="5" y="51.7" font-size="12" fill="#e4e6e8" font-weight="normal" text-anchor="start" stroke="#e4e6e8" stroke-width="0.35" >4 heures</text>
<text x="90.5" y="51" font-size="10" fill="#f0e030" font-weight="bold" text-anchor="start" stroke="#f0e030" stroke-width="0.3" >1J</text>
<text x="113" y="51.7" font-size="12" fill="#e4e6e8" font-weight="normal" text-anchor="start" stroke="#e4e6e8" stroke-width="0.35" >2 Mois</text>
<text x="227" y="51.7" font-size="12" fill="#e4e6e8" font-weight="normal" text-anchor="start" stroke="#e4e6e8" stroke-width="0.35" >Modèles</text>
<text x="332" y="51.7" font-size="12" fill="#e4e6e8" font-weight="normal" text-anchor="start" stroke="#e4e6e8" stroke-width="0.35" >Cours Moyen</text>
<text x="898" y="51.7" font-size="12" fill="#e4e6e8" font-weight="normal" text-anchor="start" stroke="#e4e6e8" stroke-width="0.35" >Paramètres</text>
<path d="M71 45 L79 45 L75 51 Z" fill="#8e8e8e"/>
<path d="M185 45 L193 45 L189 51 Z" fill="#8e8e8e"/>
<path d="M283 45 L291 45 L287 51 Z" fill="#8e8e8e"/>
<path d="M413 45 L421 45 L417 51 Z" fill="#8e8e8e"/>
<path d="M971 45 L979 45 L975 51 Z" fill="#8e8e8e"/>
<g fill="#8e8e8e">
<rect x="213" y="42.5" width="7" height="1.4"/><rect x="206" y="42.5" width="3" height="1.4"/><path d="M210 40.5 L210 45.5 L207 43.2 Z"/>
<rect x="206" y="47.3" width="9" height="1.4"/><rect x="217" y="47.3" width="3" height="1.4"/><path d="M215 45.5 L215 50.5 L218 48 Z"/>
<rect x="213" y="52.5" width="7" height="1.4"/><rect x="206" y="52.5" width="3" height="1.4"/><path d="M210 50.5 L210 55.5 L211 53 Z"/>
</g>
<g stroke="#8e8e8e" fill="none" stroke-width="1"><rect x="310.5" y="49.5" width="3" height="3"/><line x1="312" y1="46" x2="312" y2="49.5"/><rect x="315.5" y="44.5" width="3" height="6"/><line x1="317" y1="41" x2="317" y2="44.5"/><line x1="317" y1="50.5" x2="317" y2="54"/><rect x="320.5" y="43.5" width="3" height="5"/><line x1="322" y1="40.5" x2="322" y2="43.5"/></g>
<g stroke="#b4b4b4" fill="none" stroke-width="1.2">
<path d="M666 54.4 L679.6 54.4 L679.6 41"/><line x1="672" y1="42.6" x2="677" y2="42.6"/><line x1="672" y1="45.5" x2="677" y2="45.5"/><line x1="672" y1="48.4" x2="677" y2="48.4"/><line x1="672" y1="51.3" x2="677" y2="51.3"/>
<line x1="726" y1="45.5" x2="740" y2="45.5"/><line x1="726" y1="50.5" x2="740" y2="50.5"/><line x1="730.2" y1="40.8" x2="730.2" y2="54.8"/><line x1="735.2" y1="40.8" x2="735.2" y2="54.8"/>
<line x1="755.9" y1="43.4" x2="764.9" y2="43.4"/><line x1="755.9" y1="47.5" x2="764" y2="47.5"/><line x1="758.4" y1="41" x2="758.4" y2="50.7"/><line x1="762.5" y1="41" x2="762.5" y2="49"/>
<path d="M786.2 47.6 L793.6 47.6 L793.6 54.6 L786.2 54.6 Z"/>
<line x1="822.5" y1="41.9" x2="822.5" y2="45.3"/><line x1="822.5" y1="50.3" x2="822.5" y2="54.2"/><rect x="820.6" y="45.3" width="3.8" height="5"/><line x1="816.4" y1="50.6" x2="820.6" y2="49.2" stroke-width="0.8"/><line x1="824.4" y1="46.8" x2="829.8" y2="45.3" stroke-width="0.8"/>
<path d="M851 43.6 L859.6 43.6 L859.6 52.6 L851 52.6 L846.5 48.1 Z" stroke="#f4f4f4" stroke-width="1.3"/>
</g>
<line x1="761" y1="53.5" x2="769" y2="45.9" stroke="#a8a8a8" stroke-width="3" stroke-linecap="round"/><line x1="763.5" y1="51" x2="766" y2="48.6" stroke="#3a3a3a" stroke-width="0.8"/>
<g fill="none" stroke="#b4b4b4" stroke-width="1.9"><path d="M788.1 45.2 L796.2 45.2 L796.2 52.8"/><path d="M790 42 L799 42 L799 50.9"/></g>
<text x="700" y="53" font-size="15.3" fill="#b4b4b4" text-anchor="middle" style="font-family:'Liberation Serif',serif;font-weight:bold">T</text>
<text x="707.7" y="53" font-size="9" fill="#b4b4b4" text-anchor="middle" style="font-family:'Liberation Serif',serif;font-weight:bold">T</text>
<g stroke="#8a8a8a" stroke-width="1.7" fill="none"><circle cx="882.9" cy="48" r="3.8"/><line x1="887.50" y1="48.00" x2="889.90" y2="48.00"/><line x1="885.20" y1="51.98" x2="886.40" y2="54.06"/><line x1="880.60" y1="51.98" x2="879.40" y2="54.06"/><line x1="878.30" y1="48.00" x2="875.90" y2="48.00"/><line x1="880.60" y1="44.02" x2="879.40" y2="41.94"/><line x1="885.20" y1="44.02" x2="886.40" y2="41.94"/></g>
</svg>
</body></html>
